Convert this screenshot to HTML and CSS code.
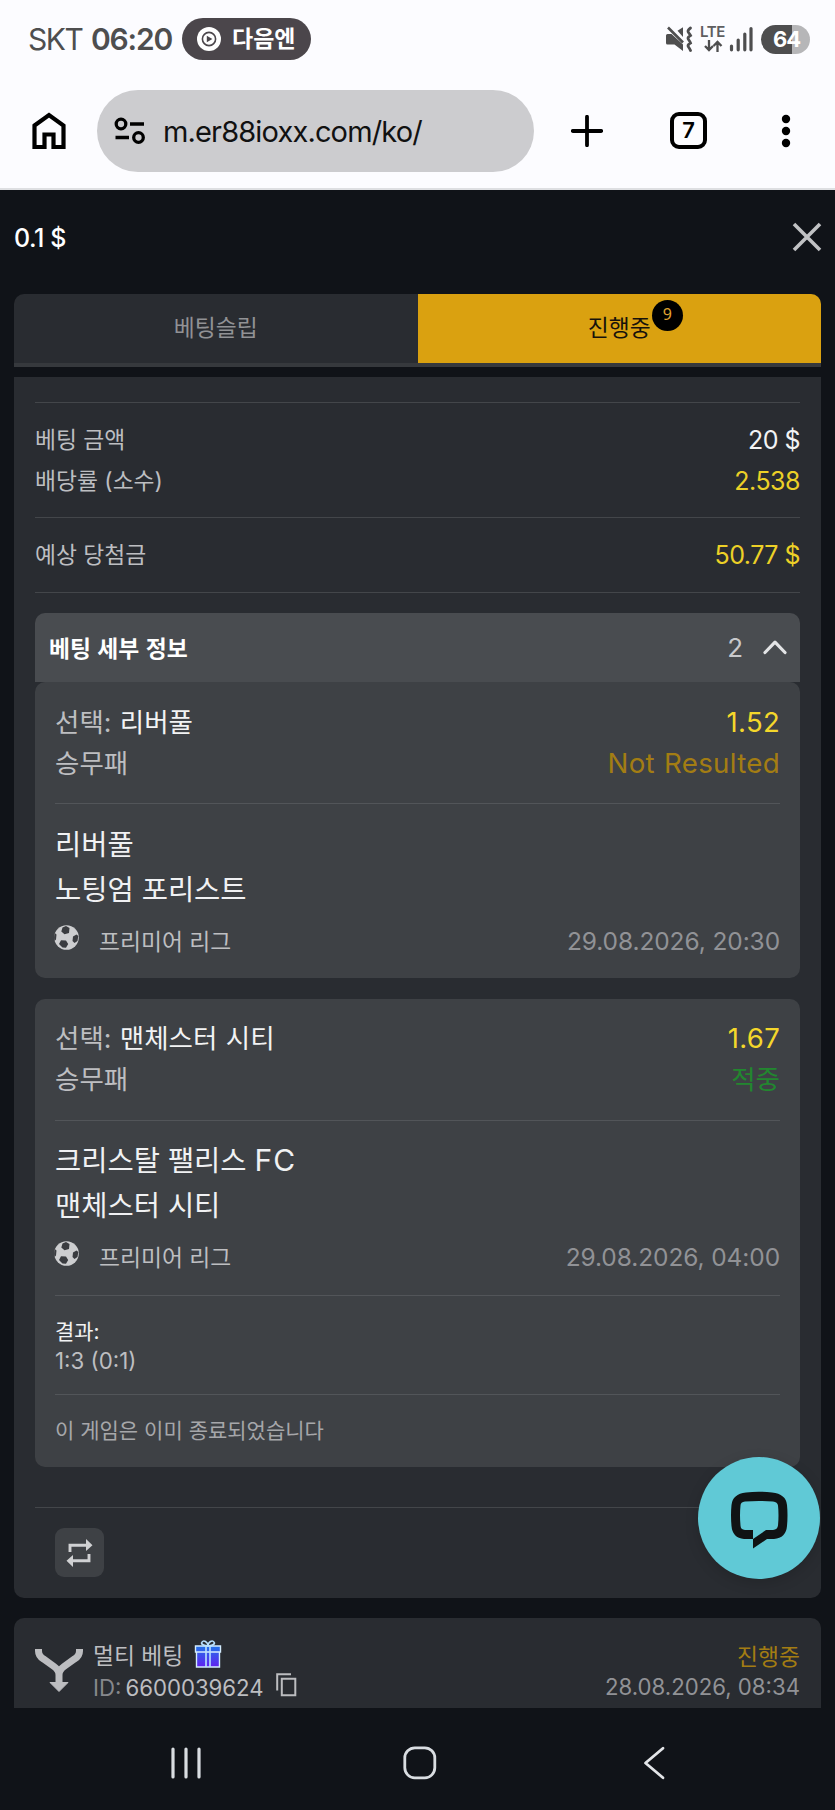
FILE: index.html
```html
<!DOCTYPE html>
<html lang="ko">
<head>
<meta charset="utf-8">
<title>베팅 내역</title>
<link rel="stylesheet" href="styles.css">
</head>
<body>
<div class="phone">
  <div class="status">
    <span class="carrier">SKT</span>
    <span class="clock">06:20</span>
    <div class="pill">
      <svg width="24" height="24" viewBox="0 0 24 24"><circle cx="12" cy="12" r="12" fill="#fff"/><circle cx="12" cy="12" r="6.6" fill="none" stroke="#4b464b" stroke-width="1.6"/><path d="M9.8 8.8v6.4l5.6-3.2z" fill="#4b464b"/></svg>
      <span>다음엔</span>
    </div>
    <div class="status-icons">
      <svg class="mute" width="28" height="26" viewBox="0 0 28 26"><path d="M1 9.500Q1 8 2.500 8H6.500L18 18.500V25L9.500 18.500H2.500Q1 18.500 1 17z" fill="#4e4e4f"/><path d="M12.500 4.800L18 1.200V11z" fill="#4e4e4f"/><path d="M3 1.500L18 16.500" stroke="#4e4e4f" stroke-width="2.600"/><path d="M25.500 2q-3.500 2.500-2 4.500t2 3q-3.500 2-2 4t2 3.500q-3.500 2-2 4t2 3.500" fill="none" stroke="#4e4e4f" stroke-width="2.800" stroke-linecap="round"/></svg>
      <div class="lte">
        <span>LTE</span>
        <svg width="20" height="12" viewBox="0 0 20 12"><path d="M6 0V10M2 6L6 10L10 6M14.500 12V2M10.500 6L14.500 2L18.500 6" fill="none" stroke="#4e4e4f" stroke-width="2.300"/></svg>
      </div>
      <svg class="signal" width="24" height="26" viewBox="0 0 24 26"><path d="M2.500 20V23.800M9.200 14V23.800M15.800 8V23.800M22 2.500V23.800" stroke="#4e4e4f" stroke-width="3.200" stroke-linecap="round"/></svg>
      <div class="battery"><span>64</span></div>
    </div>
  </div>

  <div class="browser">
    <svg class="home" width="34" height="38" viewBox="0 0 34 38"><path d="M2.500 13.500L17 3L31.500 13.500V35H21.500V22.500H12.500V35H2.500z" fill="none" stroke="#000" stroke-width="4.200"/></svg>
    <div class="url">
      <svg width="32" height="28" viewBox="0 0 32 28"><g fill="none" stroke="#000" stroke-width="3.300"><circle cx="7" cy="7" r="4.800"/><path d="M16 7H30M1.500 20.500H15"/><circle cx="24.500" cy="20.500" r="4.800"/></g></svg>
      <span>m.er88ioxx.com/ko/</span>
    </div>
    <svg class="plus" width="32" height="32" viewBox="0 0 32 32"><path d="M16 1.800V30.200M1.800 16H30.200" stroke="#000" stroke-width="3.800" stroke-linecap="round"/></svg>
    <div class="tabcount">7</div>
    <svg class="more" width="10" height="34" viewBox="0 0 10 34"><circle cx="5" cy="5" r="4.200"/><circle cx="5" cy="17" r="4.200"/><circle cx="5" cy="29" r="4.200"/></svg>
  </div>

  <div class="topbar">
    <span class="balance">0.1 $</span>
    <svg width="30" height="30" viewBox="0 0 30 30"><path d="M2 2L28 28M28 2L2 28" stroke="#c1c2c4" stroke-width="3.600"/></svg>
  </div>

  <div class="tabs">
    <div class="tab">베팅슬립</div>
    <div class="tab active"><span>진행중<b class="badge">9</b></span></div>
  </div>

  <div class="scroll">
    <div class="bet">
      <div class="pair-group">
        <div class="pair"><span>베팅 금액</span><span class="num white">20 $</span></div>
        <div class="pair"><span>배당률 (소수)</span><span class="num yellow">2.538</span></div>
      </div>
      <div class="pair-group single">
        <div class="pair"><span>예상 당첨금</span><span class="num yellow">50.77 $</span></div>
      </div>

      <div class="details-head">
        <span>베팅 세부 정보</span>
        <div class="count"><span>2</span>
          <svg width="24" height="16" viewBox="0 0 24 16"><path d="M2 13.500L12 3.200L22 13.500" fill="none" stroke="#e3e4e6" stroke-width="3.200" stroke-linecap="round" stroke-linejoin="round"/></svg>
        </div>
      </div>

      <div class="event">
        <div class="selection">
          <div class="line"><span>선택: <em>리버풀</em></span><span class="odds">1.52</span></div>
          <div class="line"><span>승무패</span><span class="pending">Not Resulted</span></div>
        </div>
        <div class="match">
          <div class="team">리버풀</div>
          <div class="team">노팅엄 포리스트</div>
          <div class="league">
            <svg width="25" height="25" viewBox="0 0 25 25"><use href="#ball"/></svg>
            <span>프리미어 리그</span><time>29.08.2026, 20:30</time>
          </div>
        </div>
      </div>

      <div class="event second">
        <div class="selection">
          <div class="line"><span>선택: <em>맨체스터 시티</em></span><span class="odds">1.67</span></div>
          <div class="line"><span>승무패</span><span class="won">적중</span></div>
        </div>
        <div class="match">
          <div class="team">크리스탈 팰리스 <span class="latin">FC</span></div>
          <div class="team">맨체스터 시티</div>
          <div class="league">
            <svg width="25" height="25" viewBox="0 0 25 25"><use href="#ball"/></svg>
            <span>프리미어 리그</span><time>29.08.2026, 04:00</time>
          </div>
        </div>
        <div class="result"><div class="result-title">결과:</div><div class="score">1:3 (0:1)</div></div>
        <div class="ended">이 게임은 이미 종료되었습니다</div>
      </div>

      <div class="actions">
        <div class="repeat">
          <svg width="27" height="30" viewBox="0 0 27 30"><path d="M4 14V7.300H20M23 16V22.700H7" fill="none" stroke="#d0d1d3" stroke-width="2.900"/><path d="M20 1L26.500 7.300L20 13zM7 17L.5 22.700L7 29z" fill="#d0d1d3"/></svg>
        </div>
      </div>
    </div>

    <div class="bet next">
      <svg class="multi" width="48" height="46" viewBox="0 0 48 46"><path d="M3.500 1V3Q3.500 8 8.500 11L19 18.500Q24 22 24 27V36M44.500 1V3Q44.500 8 39.500 11L29 18.500Q24 22 24 27" fill="none" stroke="#bcbdc0" stroke-width="7"/><path d="M15 34.500H33L24 43.500z" fill="#bcbdc0" stroke="#bcbdc0" stroke-linejoin="round"/></svg>
      <div class="bet-name">
        <div class="bet-title">멀티 베팅
          <svg width="28" height="28" viewBox="0 0 28 28"><defs><linearGradient id="gift" gradientUnits="userSpaceOnUse" x1="0" y1="4" x2="0" y2="27"><stop offset="0" stop-color="#1b7be8"/><stop offset="1" stop-color="#6020f0"/></linearGradient></defs><path d="M2.500 12H25.500V27H2.500zM1.500 6H26.500V12H1.500z" fill="url(#gift)" stroke="#d3ecff" stroke-width="1.400"/><path d="M12 6V27M16 6V27M14 6Q8 5.500 7.500 3Q9 0 11.500 1.500T14 6Q14 3 16.500 1.500T20.500 3Q20 5.500 14 6" fill="none" stroke="#b9e2ff" stroke-width="1.600"/></svg>
        </div>
        <div class="bet-id"><i>ID:</i><span>6600039624</span>
          <svg width="21" height="24" viewBox="0 0 21 24"><path d="M15 1.200H1.200V17.500M5.800 5.800H19.300V22.300H5.800z" fill="none" stroke="#bcbdc0" stroke-width="2"/></svg>
        </div>
      </div>
      <div class="bet-state"><div>진행중</div><time>28.08.2026, 08:34</time></div>
    </div>

    <div class="chat">
      <svg width="58" height="58" viewBox="0 0 58 58"><path d="M16 1.500Q28.500 0 42 1.500Q56 3 57 14Q58 24 57 35Q56 47 44 48H37L23 57.500V48H14Q2.500 47 1.500 35Q.5 24 1.500 14Q2.500 3 16 1.500z" fill="#101314"/><path d="M15 10.500Q29 9.500 43 10.500Q47.500 11 48 14.500Q49 24 48 34.500Q47.500 38.500 43 39H36L23 48V39H15Q10.500 38.500 10.500 34.500Q9.500 24 10.500 14.500Q10.500 11 15 10.500z" fill="#60c9d6"/></svg>
    </div>
  </div>

  <div class="nav">
    <svg width="30" height="32" viewBox="0 0 30 32"><path d="M2 2V30M15 2V30M28 2V30" stroke="#d9dde1" stroke-width="3.200" stroke-linecap="round"/></svg>
    <svg class="nav-home" width="34" height="34" viewBox="0 0 34 34"><rect x="1.800" y="1.800" width="30" height="30" rx="10" fill="none" stroke="#d9dde1" stroke-width="2.800"/></svg>
    <svg width="22" height="34" viewBox="0 0 22 34"><path d="M20 2.200L2.500 17L20 31.800" fill="none" stroke="#e3e5e8" stroke-width="2.800" stroke-linecap="round" stroke-linejoin="round"/></svg>
  </div>
</div>
<svg class="symbols" width="0" height="0"><defs><g id="ball"><circle cx="12.500" cy="12.500" r="12.300" fill="#cdced0"/><path d="M8.500 2.500L12 1L15.500 3L15 8L10.500 9.200L7.300 6.500zM19 11.500L22.500 9.500L24.300 11L23.500 16L20.500 18L18.500 16zM7 15.200L12 15.500L14.200 19L12 22.800L8.500 22.500L5 19zM.8 8L2.500 9.500L2 14.500L.5 16Q-.5 12 .8 8z" fill="#3a3c40"/></g></defs></svg>
</body>
</html>
```
FILE: styles.css
```css
* { box-sizing: border-box; }
body { margin: 0; background: #101318; font-family: Inter, "Noto Sans CJK KR", sans-serif; }
svg { display: block; flex: none; }
.symbols { position: absolute; }
.phone { width: 835px; height: 1810px; display: flex; flex-direction: column; overflow: hidden; white-space: nowrap; }

.status { height: 80px; padding: 0 25px 2px 28px; background: #fcfcff; display: flex; align-items: center; color: #4e4e4f; }
.carrier { font-size: 30px; letter-spacing: -1.5px; width: 63px; }
.clock { font-size: 30px; font-weight: 600; width: 91px; letter-spacing: -1.2px; }
.pill { width: 129px; height: 42px; border-radius: 21px; background: #4b464b; color: #fff; display: flex; align-items: center; padding-left: 15px; gap: 11px; font-size: 23px; font-weight: 700; }
.pill span { line-height: 36px; }
.status-icons { margin-left: auto; display: flex; align-items: center; }
.lte { width: 25px; margin-left: 7px; display: flex; flex-direction: column; align-items: center; gap: 3px; font-size: 15px; line-height: 11px; font-weight: 600; letter-spacing: -0.3px; color: #5e5e60; }
.signal { margin-left: 4px; }
.battery { width: 49px; height: 29px; margin-left: 8px; border-radius: 15px; background: linear-gradient(90deg, #4e4e4f 64%, #b6b6b8 64%); color: #fff; font-size: 22px; font-weight: 700; letter-spacing: -1px; line-height: 29px; text-align: center; padding-left: 2px; }

.browser { height: 110px; padding: 10px 41px 0 32px; background: #fcfcff; border-bottom: 2px solid #dedfe2; display: flex; align-items: flex-start; }
.home { margin: 22px 31px 0 0; }
.url { width: 437px; height: 82px; border-radius: 41px; background: #cccccf; display: flex; align-items: center; padding-left: 17px; gap: 17px; font-size: 29px; letter-spacing: -0.85px; color: #111; }
.plus { margin: 25px 0 0 37px; }
.tabcount { width: 37px; height: 37px; margin: 22px 0 0 67px; border: 4px solid #000; border-radius: 9px; font-size: 22px; font-weight: 600; line-height: 29px; text-align: center; }
.more { margin: 24px 0 0 74px; }

.topbar { height: 104px; padding: 0 13px 10px 14px; display: flex; align-items: center; justify-content: space-between; color: #fff; }
.balance { font-size: 25px; font-weight: 500; letter-spacing: -0.4px; padding-top: 2px; }

.tabs { height: 73px; margin: 0 14px; border-radius: 10px 10px 0 0; overflow: hidden; display: flex; flex: none; background: #292c31; border-bottom: 4px solid #36393d; }
.tab { flex: 1; line-height: 68px; text-align: center; font-size: 22.800px; color: #919295; }
.active { background: #daa110; color: #17120b; }
.active > span { position: relative; }
.badge { position: absolute; left: 64px; top: -14px; width: 31px; height: 31px; border-radius: 50%; background: #000; color: #e0a530; font: 400 16px/28px "Noto Sans", sans-serif; }

.scroll { position: relative; height: 1331px; flex: none; margin: 10px 14px 0; overflow: hidden; }
.bet { background: #292c31; border-radius: 0 0 10px 10px; padding: 25px 21px 0; height: 1221px; color: #bdbec1; }
.pair-group { height: 115px; border-top: 1px solid #43464a; padding-top: 16px; font-size: 22.800px; }
.pair { height: 41px; display: flex; justify-content: space-between; align-items: center; line-height: 41px; }
.single { height: 76px; border-bottom: 1px solid #43464a; }
.num { font-size: 25px; letter-spacing: -0.5px; padding-top: 2px; }
.white { color: #f2f3f4; }
.yellow { color: #ecd027; }
.details-head { height: 69px; margin-top: 20px; border-radius: 10px 10px 0 0; background: #494c50; display: flex; justify-content: space-between; align-items: center; padding: 0 13px 1px 14px; font-size: 22.800px; word-spacing: 1px; font-weight: 700; color: #fff; }
.count { display: flex; align-items: center; gap: 20px; font-size: 26px; font-weight: 400; color: #c8c9cc; }
.event { height: 296px; border-radius: 10px; background: #3e4145; padding: 0 20px; }
.second { height: 468px; margin-top: 21px; }
.selection { height: 122px; padding-top: 20px; border-bottom: 1px solid #525559; font-size: 26.500px; word-spacing: 1px; }
.second .selection { padding-top: 19px; }
.line { height: 41px; line-height: 41px; display: flex; justify-content: space-between; }
.line em { font-style: normal; color: #f2f3f4; }
.odds { font-size: 27.500px; letter-spacing: 0.3px; color: #f4d72b; }
.pending { font-size: 27.700px; letter-spacing: 0.3px; color: #a37d13; }
.won { color: #22872f; }
.match { padding-top: 18px; }
.second .match { padding-top: 17px; }
.team { height: 45px; line-height: 45px; font-size: 28.500px; color: #f0f1f3; }
.latin { font-size: 30px; letter-spacing: 1px; }
.league { height: 57px; display: flex; align-items: center; font-size: 22.800px; }
.league span { margin-left: 19px; }
.league svg { margin: 0 1px 6px -1px; }
time { color: #919296; }
.league time { margin-left: auto; font-size: 24.500px; letter-spacing: -0.1px; }
.result { height: 100px; margin-top: 10px; border-top: 1px solid #525559; border-bottom: 1px solid #525559; padding-top: 21px; font-size: 20.900px; }
.result-title { line-height: 29px; color: #f2f3f4; }
.score { line-height: 29px; font-size: 22.300px; }
.ended { line-height: 71px; font-size: 21px; color: #a6a7aa; }
.actions { margin-top: 40px; border-top: 1px solid #43464a; padding: 20px; }
.repeat { width: 49px; height: 49px; border-radius: 9px; background: #3e4145; display: grid; place-items: center; }

.next { margin-top: 20px; height: 120px; border-radius: 10px 10px 0 0; display: flex; padding: 20px 21px 0; }
.multi { margin-top: 10px; }
.bet-name { margin-left: 10px; }
.bet-title { display: flex; gap: 11px; height: 32px; align-items: center; font-size: 22.800px; }
.bet-id { display: flex; align-items: center; height: 35px; font-size: 22.200px; color: #bdbec1; }
.bet-id i { font-style: normal; color: #86888c; margin-right: 4px; }
.bet-id svg { margin: -5px 0 0 12px; }
.bet-state { margin-left: auto; text-align: right; font-size: 22.800px; color: #a37d13; line-height: 37px; }
.bet-state time { display: block; font-size: 22.200px; line-height: 24px; }

.chat { position: absolute; right: 1px; bottom: 129px; width: 122px; height: 122px; border-radius: 50%; background: #60c9d6; padding: 34px 0 0 32px; box-shadow: 0 4px 14px rgba(0,0,0,.15); }
.nav { height: 102px; padding: 7px 170px 0 171px; display: flex; align-items: center; justify-content: space-between; }
.nav-home { margin-right: 4px; }
```
